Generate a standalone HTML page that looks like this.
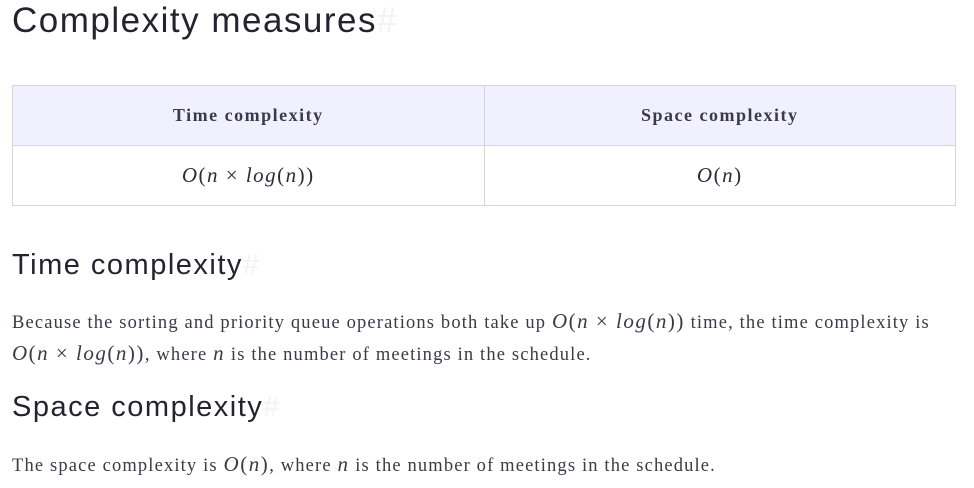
<!DOCTYPE html><html><head><style>
body{margin:0;background:#fff;color:#2b2b3b;font-family:"Liberation Serif",serif;}
h1,h2{font-family:"Liberation Sans",sans-serif;font-weight:400;color:#25232f;margin:0;position:absolute;left:12px}
h1{font-size:35px;top:1px;letter-spacing:1.5px}
h2{font-size:29px;letter-spacing:1.5px}
.h{color:#f2f2f2}
table{position:absolute;left:12px;top:85px;width:944px;border-collapse:collapse}
td,th{border:1px solid #d4d4dc;text-align:center;width:50%;padding:0}
th{height:59px;background:#f0f0fe;font-size:18px;letter-spacing:1.5px;color:#3a3a4a}
td{height:59px;font-size:20px}
.m{font-style:italic;font-size:21px;letter-spacing:1.5px}
.r{font-style:normal}
p{position:absolute;left:12px;margin:0;font-size:18.5px;letter-spacing:1.15px;line-height:30px;width:960px;color:#3a3a48}
</style></head><body>
<h1>Complexity measures<span class="h">#</span></h1>
<table><tr><th>Time complexity</th><th>Space complexity</th></tr>
<tr><td><span class="m">O<span class="r">(</span>n <span class="r">×</span> log<span class="r">(</span>n<span class="r">))</span></span></td><td><span class="m">O<span class="r">(</span>n<span class="r">)</span></span></td></tr></table>
<h2 style="top:249px">Time complexity<span class="h">#</span></h2>
<p style="top:306px">Because the sorting and priority queue operations both take up <span class="m">O<span class="r">(</span>n <span class="r">×</span> log<span class="r">(</span>n<span class="r">))</span></span> time, the time complexity is<br><span class="m">O<span class="r">(</span>n <span class="r">×</span> log<span class="r">(</span>n<span class="r">))</span></span>, where <span class="m">n</span> is the number of meetings in the schedule.</p>
<h2 style="top:391px">Space complexity<span class="h">#</span></h2>
<p style="top:449px">The space complexity is <span class="m">O<span class="r">(</span>n<span class="r">)</span></span>, where <span class="m">n</span> is the number of meetings in the schedule.</p>
</body></html>
